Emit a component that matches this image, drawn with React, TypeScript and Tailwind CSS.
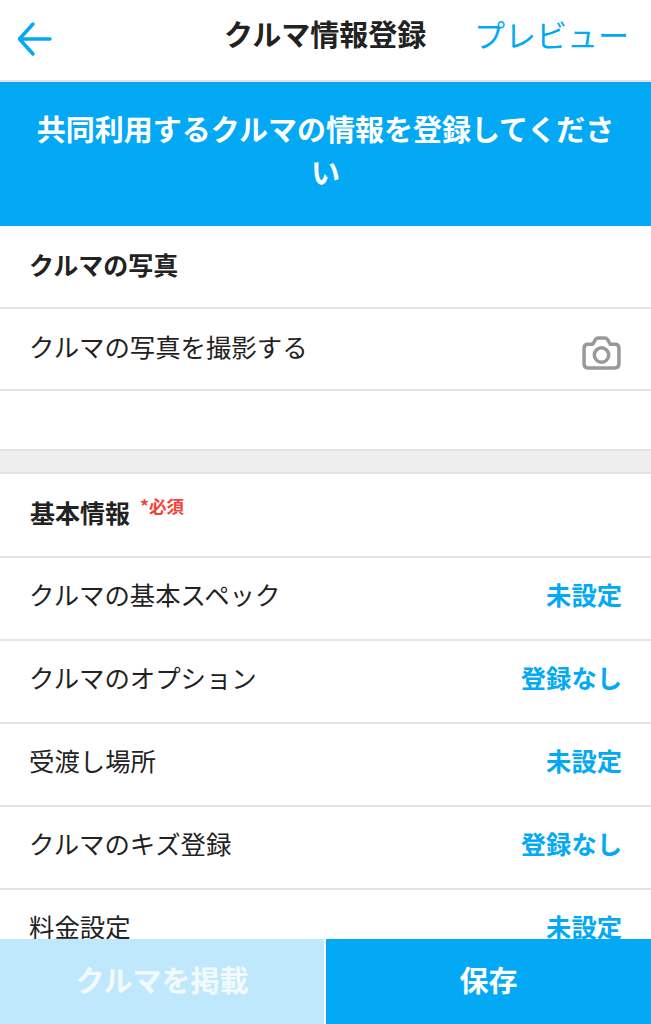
const ROWS = [
  { label: "クルマの基本スペック", value: "未設定" },
  { label: "クルマのオプション", value: "登録なし" },
  { label: "受渡し場所", value: "未設定" },
  { label: "クルマのキズ登録", value: "登録なし" },
  { label: "料金設定", value: "未設定" },
];

export default function App() {
  return (
    <div className="relative h-[1024px] w-[651px] overflow-hidden bg-white font-['Noto_Sans_CJK_JP',sans-serif] text-[#222]">
      <header className="flex h-[82px] items-center border-b-2 border-[#e3e3e3] pl-[16px] pr-[22px]">
        <svg width="38" height="38" viewBox="0 0 38 38" fill="none" stroke="#04a9f5" strokeWidth="3.5" strokeLinecap="round" strokeLinejoin="round" className="mb-[2px]">
          <path d="M34 19H4" />
          <path d="M17 4 3.5 19 17 34" />
        </svg>
        <h1 className="mb-[14px] ml-[170px] text-[29px] leading-none font-bold whitespace-nowrap">クルマ情報登録</h1>
        <span className="mb-[14px] ml-auto text-[31px] leading-none text-[#04a9f5]">プレビュー</span>
      </header>

      <div className="flex h-[144px] items-center justify-center bg-[#04a9f5] px-[36px] pb-[8px] text-center text-[29px] leading-[43px] font-bold text-white">
        共同利用するクルマの情報を登録してください
      </div>

      <div className="flex h-[83px] items-center border-b-2 border-[#e3e3e3] px-[29px] pb-[4px] text-[25px] font-bold">
        クルマの写真
      </div>
      <div className="flex h-[82px] items-center justify-between border-b-2 border-[#e3e3e3] pl-[29px] pr-[30px] text-[25.4px]">
        <span className="mb-[6px]">クルマの写真を撮影する</span>
        <svg width="39" height="36" viewBox="0 0 38 35" fill="none" stroke="#999" strokeWidth="3.4" strokeLinejoin="round" className="mt-[8px]">
          <path d="M6 9h4.5l2.5-4.5Q14 3 16 3h6q2 0 3 1.5L27.5 9H32q4 0 4 4v15q0 4-4 4H6q-4 0-4-4V13q0-4 4-4Z" />
          <circle cx="19" cy="19.5" r="7" />
        </svg>
      </div>
      <div className="h-[58px]" />

      <div className="h-[25px] border-y-2 border-[#e3e3e3] bg-[#eeeeee]" />

      <div className="flex h-[84px] items-center border-b-2 border-[#e3e3e3] px-[30px] pb-[5px] text-[25px] font-bold">
        基本情報
        <span className="mb-[12px] ml-[10px] text-[17.5px] font-bold text-[#f44336]">*必須</span>
      </div>
      {ROWS.map((r) => (
        <div key={r.label} className="flex h-[83px] items-center justify-between border-b-2 border-[#e3e3e3] pb-[8px] pl-[29px] pr-[29px] text-[25.4px]">
          <span>{r.label}</span>
          <span className="text-[25.3px] font-bold text-[#04a9f5]">{r.value}</span>
        </div>
      ))}

      <div className="absolute bottom-0 left-0 flex h-[85px] w-full gap-[2px] bg-white text-[29px] font-bold text-white">
        <button className="w-[324px] bg-[#bfe8fc] pb-[4px] text-white/80">クルマを掲載</button>
        <button className="flex-1 bg-[#04a9f5] pb-[4px]">保存</button>
      </div>
    </div>
  );
}
